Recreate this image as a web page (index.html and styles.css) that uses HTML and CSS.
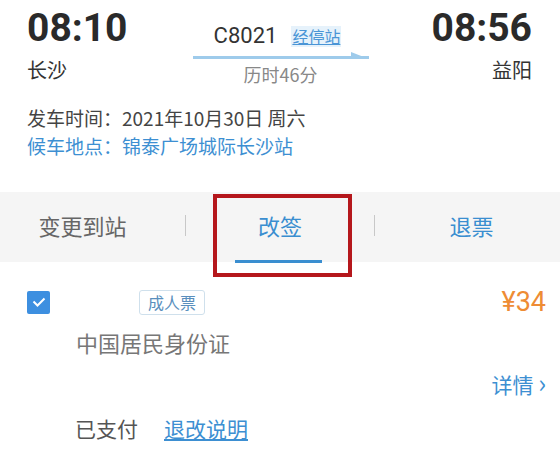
FILE: index.html
```html
<!DOCTYPE html>
<html lang="zh-CN">
<head>
    <meta charset="UTF-8">
    <meta name="viewport" content="width=device-width, initial-scale=1.0">
    <title>订单详情</title>
    <link rel="stylesheet" href="styles.css">
</head>
<body>
    <section class="trip">
        <div class="trip-row">
            <div class="station">
                <div class="time">08:10</div>
                <div class="city">长沙</div>
            </div>
            <div class="train">
                <div class="train-no">
                    <span class="code">C8021</span>
                    <a class="stops" href="#">经停站</a>
                </div>
                <svg class="arrow" width="176" height="9" viewBox="0 0 176 9">
                    <rect x="0" y="5" width="176" height="3" fill="#9ecbeb"/>
                    <polygon points="158,1 176,8 158,8" fill="#9ecbeb"/>
                </svg>
                <div class="duration">历时46分</div>
            </div>
            <div class="station right">
                <div class="time">08:56</div>
                <div class="city">益阳</div>
            </div>
        </div>
        <div class="depart">发车时间：2021年10月30日 周六</div>
        <div class="waiting">候车地点：锦泰广场城际长沙站</div>
    </section>

    <nav class="tabs">
        <div class="tab first">变更到站</div>
        <span class="sep"></span>
        <div class="tab active">
            <span>改签</span>
            <i class="bar"></i>
        </div>
        <span class="sep"></span>
        <div class="tab last">退票</div>
        <div class="mark"></div>
    </nav>

    <section class="ticket">
        <div class="ticket-top">
            <span class="check">
                <svg width="14" height="10" viewBox="0 0 14 10">
                    <polyline points="1.5,4.5 5.5,8.5 12.5,1.5" fill="none" stroke="#fff" stroke-width="2"/>
                </svg>
            </span>
            <span class="name"></span>
            <span class="tag">成人票</span>
            <span class="price">¥34</span>
        </div>
        <div class="id-type">中国居民身份证</div>
        <div class="detail">详情 <span class="chev">&#8250;</span></div>
        <div class="paid">
            <span>已支付</span>
            <a class="rules" href="#">退改说明</a>
        </div>
    </section>
</body>
</html>
```

FILE: styles.css
```css
body {
    margin: 0;
    width: 560px;
    height: 473px;
    overflow: hidden;
    background-color: #fff;
    font-family: 'Noto Sans CJK SC', 'Noto Sans', sans-serif;
    color: #333;
}
a {
    text-decoration: none;
}
.trip {
    padding: 4px 28px 0 27px;
    height: 192px;
    box-sizing: border-box;
}
.trip-row {
    display: flex;
    justify-content: space-between;
}
.station {
    display: flex;
    flex-direction: column;
}
.station.right {
    align-items: flex-end;
}
.time {
    font-family: Roboto, 'Noto Sans', sans-serif;
    font-weight: 700;
    font-size: 39px;
    line-height: 48px;
    color: #2a2a2a;
}
.city {
    font-size: 20px;
    line-height: 28px;
    margin-top: 4px;
    color: #333;
}
.train {
    display: flex;
    flex-direction: column;
    align-items: center;
    padding-top: 18px;
    margin-left: 2px;
}
.train-no {
    display: flex;
    align-items: center;
    gap: 14px;
    margin-left: -6px;
}
.code {
    font-family: Roboto, 'Noto Sans', sans-serif;
    font-size: 22px;
    line-height: 28px;
    color: #333;
}
.stops {
    font-size: 16px;
    line-height: 21px;
    padding: 0 1px;
    color: #4a95d6;
    background-color: #e6f2fb;
    text-decoration: underline;
}
.arrow {
    display: block;
    margin-top: 1px;
}
.duration {
    font-size: 18px;
    line-height: 24px;
    margin-top: 2px;
    color: #888;
}
.depart,
.waiting {
    font-size: 19px;
    line-height: 28px;
}
.depart {
    margin-top: 18px;
    color: #444;
}
.waiting {
    color: #3d8fd2;
}
.tabs {
    position: relative;
    display: grid;
    grid-template-columns: 185px 1px 188px 1px 1fr;
    align-items: center;
    height: 70px;
    background-color: #f5f5f5;
}
.tab {
    display: flex;
    align-items: center;
    justify-content: center;
    height: 100%;
    padding-bottom: 5px;
    box-sizing: border-box;
    font-size: 22px;
    color: #666;
}
.tab.first {
    padding-right: 20px;
}
.tab.last {
    padding-left: 8px;
    color: #3a8ed0;
}
.tab.active {
    position: relative;
    color: #3a8ed0;
}
.tab.active .bar {
    position: absolute;
    left: 49px;
    bottom: -1px;
    width: 87px;
    height: 3px;
    background-color: #3a8ed0;
}
.sep {
    width: 1px;
    height: 21px;
    margin-bottom: 4px;
    background-color: #c8c8c8;
}
.mark {
    position: absolute;
    left: 213px;
    top: 2px;
    width: 131px;
    height: 75px;
    border: 4px solid #b5171c;
}
.ticket {
    padding: 27px 14px 0 27px;
}
.ticket-top {
    display: flex;
    align-items: center;
    height: 26px;
}
.check {
    display: flex;
    align-items: center;
    justify-content: center;
    width: 23px;
    height: 23px;
    border-radius: 2px;
    background-color: #3d8fe0;
}
.name {
    width: 89px;
}
.tag {
    font-size: 16px;
    line-height: 23px;
    padding: 0 8px;
    border: 1px solid #cfe0ec;
    border-radius: 3px;
    color: #5a8fbd;
}
.price {
    margin-left: auto;
    font-family: Roboto, 'Noto Sans', sans-serif;
    font-size: 27px;
    color: #ee8c34;
}
.id-type {
    margin: 12px 0 0 49px;
    font-size: 22px;
    line-height: 30px;
    color: #777;
}
.detail {
    margin-top: 10px;
    text-align: right;
    font-size: 21px;
    line-height: 30px;
    color: #3d8fd2;
}
.chev {
    font-size: 26px;
}
.paid {
    display: flex;
    gap: 26px;
    margin: 15px 0 0 48px;
    font-size: 21px;
    line-height: 28px;
    color: #555;
}
.rules {
    color: #3d8fd2;
    text-decoration: underline;
}
```
